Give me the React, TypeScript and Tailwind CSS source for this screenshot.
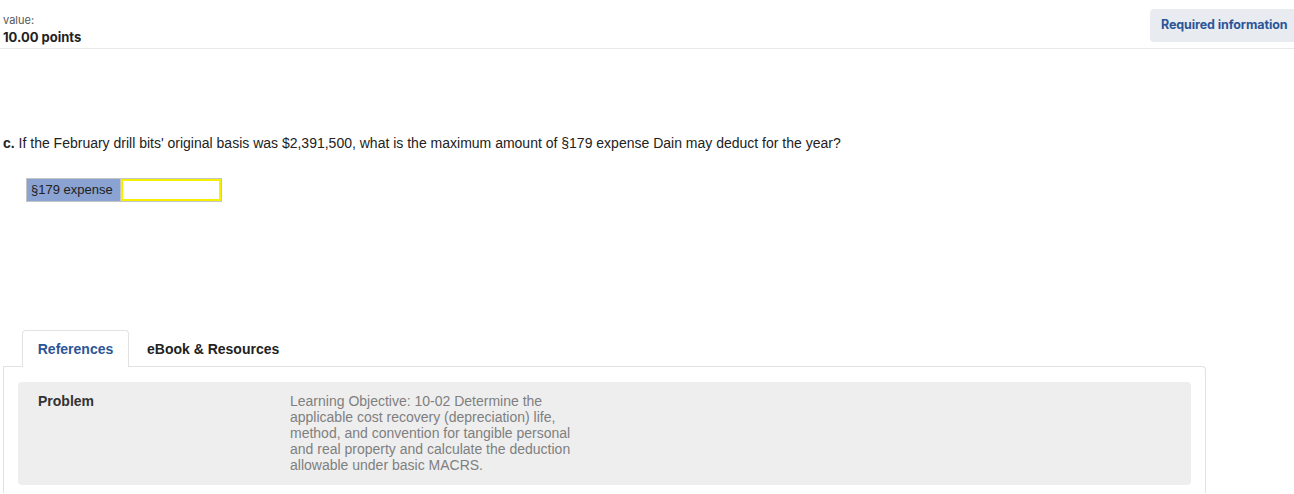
export default function App() {
  return (
    <div className="min-h-[494px] w-[1294px] bg-white font-['Liberation_Sans',Arial,sans-serif] text-[#222]">
      {/* Header */}
      <div className="flex items-start justify-between border-b border-[#e8e8e8] h-[49px]">
        <div className="pl-[3px] pt-[14px] font-['Inter',sans-serif]">
          <p className="text-[11px] leading-[13px] text-[#555]">value:</p>
          <p className="mt-[2px] text-[13px] leading-[16px] font-bold text-[#222]">10.00 points</p>
        </div>
        <div className="mt-[9px] h-[33px] w-[144px] rounded-l-[4px] bg-[#e8ecf1] pl-[11px] flex items-center font-['Inter',sans-serif] text-[12.5px] tracking-[-0.1px] font-bold text-[#2c5597] whitespace-nowrap">
          Required information
        </div>
      </div>

      {/* Question */}
      <p className="mt-[86px] pl-[3px] text-[14px] leading-[16px] text-[#222]">
        <span className="font-bold">c.</span> If the February drill bits' original basis was $2,391,500, what is the maximum amount of §179 expense Dain may deduct for the year?
      </p>

      <div className="mt-[27px] ml-[26px] flex h-[24px] w-[196px] border border-[#c4c4c4]">
        <div className="flex w-[94px] shrink-0 items-center whitespace-nowrap bg-[#8aa3d3] pl-[4px] text-[13px] text-[#222] border-r border-[#c4c4c4]">
          §179 expense
        </div>
        <input className="w-0 min-w-0 flex-1 border-2 border-[#f5f000] bg-white outline-none" />
      </div>

      {/* Tabs */}
      <div className="mt-[127px] ml-[3px] w-[1203px]">
        <div className="flex items-end pl-[19px]">
          <div className="relative -mb-px flex h-[37px] w-[107px] items-center justify-center rounded-t-[4px] border border-b-0 border-[#e2e2e2] bg-white text-[14px] font-bold text-[#2c5597]">
            References
          </div>
          <div className="flex h-[37px] items-center pl-[18px] pt-[3px] text-[14px] font-bold text-[#222]">
            eBook &amp; Resources
          </div>
        </div>
        <div className="rounded-tr-[4px] border border-b-0 border-[#e2e2e2] px-[14px] pt-[15px] pb-[8px]">
          <div className="flex h-[103px] rounded-[4px] bg-[#eeeeee] pt-[11px]">
            <div className="w-[272px] pl-[20px] text-[14px] leading-[16px] font-bold text-[#333]">Problem</div>
            <p className="w-[290px] text-[14px] leading-[16px] text-[#7f7f7f]">
              Learning Objective: 10-02 Determine the applicable cost recovery (depreciation) life, method, and convention for tangible personal and real property and calculate the deduction allowable under basic MACRS.
            </p>
          </div>
        </div>
      </div>
    </div>
  );
}
